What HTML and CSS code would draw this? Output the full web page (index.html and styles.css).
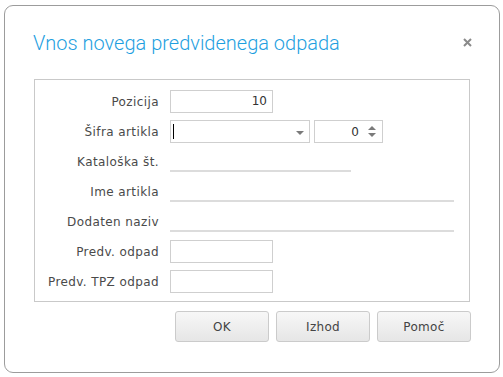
FILE: index.html
```html
<!DOCTYPE html>
<html>
 <head>
  <title>Vnos novega predvidenega odpada</title>
  <link rel="stylesheet" href="styles.css">
 </head>
 <body>
  <div class="dialog">
   <div class="dialog-head">
    <h1 class="dialog-title">Vnos novega predvidenega odpada</h1>
    <svg class="close" width="9" height="9" viewBox="0 0 9 9">
     <path d="M1 1 L8 8 M8 1 L1 8" stroke="#8a8a8a" stroke-width="2"/>
    </svg>
   </div>
   <div class="panel">
    <div class="row">
     <label class="lbl">Pozicija</label>
     <div class="box box-short num">10</div>
    </div>
    <div class="row">
     <label class="lbl">Šifra artikla</label>
     <div class="box combo"><span class="caret"></span><span class="arrow-down"></span></div>
     <div class="box spin"><span class="spin-val">0</span><span class="spin-arrows"><span class="arrow-up"></span><span class="arrow-down"></span></span></div>
    </div>
    <div class="row">
     <label class="lbl">Kataloška št.</label>
     <div class="line line-mid"></div>
    </div>
    <div class="row">
     <label class="lbl">Ime artikla</label>
     <div class="line line-long"></div>
    </div>
    <div class="row">
     <label class="lbl">Dodaten naziv</label>
     <div class="line line-long"></div>
    </div>
    <div class="row">
     <label class="lbl">Predv. odpad</label>
     <div class="box box-short"></div>
    </div>
    <div class="row">
     <label class="lbl">Predv. TPZ odpad</label>
     <div class="box box-short"></div>
    </div>
   </div>
   <div class="buttons">
    <button class="btn">OK</button>
    <button class="btn">Izhod</button>
    <button class="btn">Pomoč</button>
   </div>
  </div>
 </body>
</html>
```
FILE: styles.css
```css
body {
    margin: 0;
    background: #fff;
    font-family: "DejaVu Sans", sans-serif;
    font-size: 12px;
    color: #444;
}

.dialog {
    margin: 5px 0 0 4px;
    width: 494px;
    height: 366px;
    border: 1px solid #9c9c9c;
    border-radius: 9px;
    box-sizing: content-box;
}

.dialog-head {
    display: flex;
    align-items: center;
    justify-content: space-between;
    height: 73px;
    padding: 0 27px 0 28px;
}

.dialog-title {
    margin: 0;
    font-family: Roboto, sans-serif;
    font-weight: 300;
    font-size: 20px;
    color: #1f9fdf;
}

.close {
    display: block;
}

.panel {
    margin-left: 29px;
    width: 434px;
    height: 211px;
    border: 1px solid #c9c9c9;
    padding-top: 10px;
    box-sizing: content-box;
    display: flex;
    flex-direction: column;
    gap: 7px;
}

.row {
    display: flex;
    align-items: center;
    height: 23px;
}

.lbl {
    width: 124px;
    text-align: right;
    margin-right: 11px;
    letter-spacing: 0.4px;
    color: #4a4a4a;
}

.box {
    height: 23px;
    border: 1px solid #cfcfcf;
    box-sizing: border-box;
    background: #fff;
    position: relative;
}

.box-short {
    width: 103px;
}

.num {
    text-align: right;
    padding-right: 5px;
    line-height: 21px;
    color: #333;
}

.combo {
    width: 140px;
}

.caret {
    position: absolute;
    left: 2px;
    top: 3px;
    width: 1px;
    height: 15px;
    background: #000;
}

.combo .arrow-down {
    position: absolute;
    right: 5px;
    top: 10px;
}

.arrow-down {
    display: block;
    width: 0;
    height: 0;
    border-left: 4px solid transparent;
    border-right: 4px solid transparent;
    border-top: 4px solid #7a7a7a;
}

.arrow-up {
    display: block;
    width: 0;
    height: 0;
    border-left: 4px solid transparent;
    border-right: 4px solid transparent;
    border-bottom: 4px solid #7a7a7a;
}

.spin {
    width: 69px;
    margin-left: 4px;
    display: flex;
    align-items: center;
    justify-content: flex-end;
    padding-right: 6px;
}

.spin-val {
    margin-right: 9px;
    color: #333;
}

.spin-arrows {
    display: flex;
    flex-direction: column;
    gap: 3px;
}

.line {
    align-self: flex-end;
    height: 0;
    border-bottom: 2px solid #dcdcdc;
    margin-bottom: 1px;
}

.line-mid {
    width: 181px;
}

.line-long {
    width: 284px;
}

.buttons {
    display: flex;
    justify-content: flex-end;
    gap: 7px;
    margin: 9px 28px 0 0;
}

.btn {
    width: 94px;
    height: 31px;
    font-family: "DejaVu Sans", sans-serif;
    font-size: 12px;
    letter-spacing: 0.3px;
    color: #444;
    border: 1px solid #cbcbcb;
    border-radius: 3px;
    background: linear-gradient(#f7f7f7, #e6e6e6);
}
```
